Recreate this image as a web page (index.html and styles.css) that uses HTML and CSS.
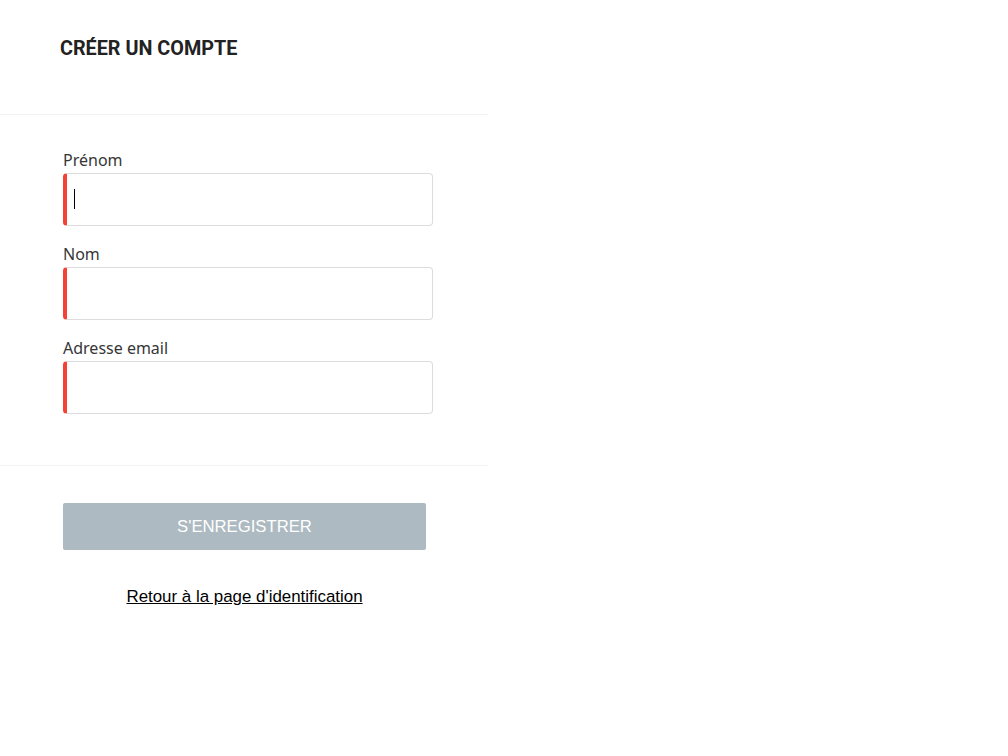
FILE: index.html
```html
<!DOCTYPE html>
<html lang="fr">
<head>
<meta charset="utf-8">
<title>Créer un compte</title>
<link rel="stylesheet" href="styles.css">
</head>
<body>
<div class="panel">
  <header class="panel-head">
    <h1 class="title">CRÉER UN COMPTE</h1>
  </header>
  <form class="fields">
    <div class="field">
      <label class="label" for="prenom">Prénom</label>
      <div class="input-wrap focused">
        <input class="input" id="prenom" type="text">
      </div>
    </div>
    <div class="field">
      <label class="label" for="nom">Nom</label>
      <div class="input-wrap">
        <input class="input" id="nom" type="text">
      </div>
    </div>
    <div class="field">
      <label class="label" for="email">Adresse email</label>
      <div class="input-wrap">
        <input class="input" id="email" type="email">
      </div>
    </div>
  </form>
  <footer class="panel-foot">
    <div class="actions">
      <button class="submit" type="button">S'ENREGISTRER</button>
      <a class="back" href="#">Retour à la page d'identification</a>
    </div>
  </footer>
</div>
</body>
</html>
```

FILE: styles.css
```css
html, body {
  margin: 0;
  padding: 0;
  background: #ffffff;
}

.panel {
  width: 488px;
  font-family: "Noto Sans", "Open Sans", sans-serif;
}

.panel-head {
  padding: 37px 60px 53px;
  border-bottom: 1px solid #f2f2f2;
}

.title {
  margin: 0;
  font-family: Roboto, "Liberation Sans", sans-serif;
  font-weight: 700;
  font-size: 19.8px;
  line-height: 24px;
  color: #222222;
}

.fields {
  display: flex;
  flex-direction: column;
  gap: 18px;
  padding: 35px 55px 51px 63px;
  margin: 0;
  border-bottom: 1px solid #f2f2f2;
}

.field {
  display: flex;
  flex-direction: column;
}

.label {
  font-size: 16px;
  line-height: 20px;
  color: #363636;
  margin-bottom: 3px;
}

.input-wrap {
  position: relative;
}

.input {
  display: block;
  box-sizing: border-box;
  width: 370px;
  height: 53px;
  margin: 0;
  padding: 0 10px;
  border: 1px solid #dcdcdc;
  border-left: 4px solid #f44336;
  border-radius: 4px;
  background: #ffffff;
  font-family: inherit;
  font-size: 16px;
  outline: none;
}

.focused::after {
  content: "";
  position: absolute;
  left: 11px;
  top: 16px;
  width: 1px;
  height: 20px;
  background: #000000;
}

.panel-foot {
  padding: 37px 0 0 63px;
}

.actions {
  width: 363px;
  display: flex;
  flex-direction: column;
  align-items: center;
  gap: 37px;
}

.submit {
  width: 363px;
  height: 47px;
  border: none;
  border-radius: 2px;
  background: #adbac1;
  color: #ffffff;
  font-family: "Liberation Sans", Arial, sans-serif;
  font-size: 16.7px;
  padding: 0;
  margin: 0;
  cursor: default;
}

.back {
  font-family: "Liberation Sans", Arial, sans-serif;
  font-size: 16.9px;
  line-height: 19px;
  color: #000000;
  text-decoration: underline;
}
```
